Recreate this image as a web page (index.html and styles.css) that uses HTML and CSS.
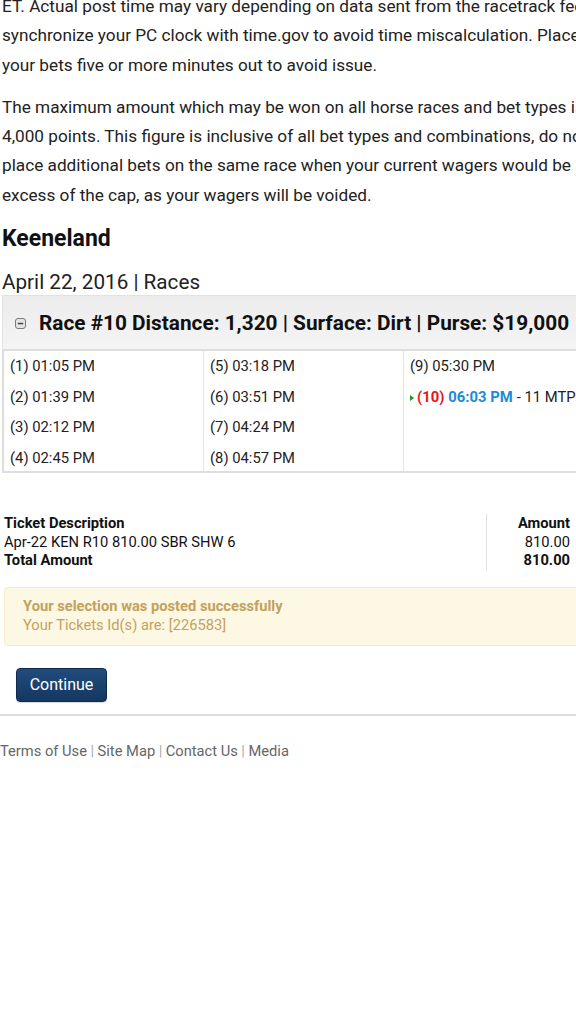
FILE: index.html
```html
<!DOCTYPE html>
<html>
<head>
<meta charset="utf-8">
<link rel="stylesheet" href="styles.css">
</head>
<body>
<div class="page">
  <p class="note first">ET. Actual post time may vary depending on data sent from the racetrack feed. synchronize your PC clock with time.gov to avoid time miscalculation. Place your bets five or more minutes out to avoid issue.</p>
  <p class="note">The maximum amount which may be won on all horse races and bet types is 4,000 points. This figure is inclusive of all bet types and combinations, do not place additional bets on the same race when your current wagers would be in excess of the cap, as your wagers will be voided.</p>
  <h2 class="track">Keeneland</h2>
  <div class="date">April 22, 2016 | Races</div>
  <div class="race-head">
    <svg class="minus" width="11" height="11" viewBox="0 0 11 11"><rect x="0.5" y="0.5" width="10" height="10" rx="2.5" fill="#e4e4e4" stroke="#7a7a7a"/><rect x="2.8" y="4.8" width="5.4" height="1.5" fill="#444"/></svg>
    <span>Race #10 Distance: 1,320 | Surface: Dirt | Purse: $19,000</span>
  </div>
  <div class="times">
    <div class="col">
      <div class="t">(1) 01:05 PM</div>
      <div class="t">(2) 01:39 PM</div>
      <div class="t">(3) 02:12 PM</div>
      <div class="t">(4) 02:45 PM</div>
    </div>
    <div class="col">
      <div class="t">(5) 03:18 PM</div>
      <div class="t">(6) 03:51 PM</div>
      <div class="t">(7) 04:24 PM</div>
      <div class="t">(8) 04:57 PM</div>
    </div>
    <div class="col">
      <div class="t">(9) 05:30 PM</div>
      <div class="t cur"><span class="arrow"></span><b class="num">(10)</b><b class="time">06:03 PM</b>- 11 MTP</div>
    </div>
  </div>
  <div class="ticket">
    <div class="desc">
      <div class="b">Ticket Description</div>
      <div>Apr-22 KEN R10 810.00 SBR SHW 6</div>
      <div class="b">Total Amount</div>
    </div>
    <div class="amt">
      <div class="b">Amount</div>
      <div>810.00</div>
      <div class="b">810.00</div>
    </div>
  </div>
  <div class="alert">
    <div class="b">Your selection was posted successfully</div>
    <div>Your Tickets Id(s) are: [226583]</div>
  </div>
  <button class="btn">Continue</button>
  <hr class="rule">
  <div class="footer"><a>Terms of Use</a><span class="sep">|</span><a>Site Map</a><span class="sep">|</span><a>Contact Us</a><span class="sep">|</span><a>Media</a></div>
</div>
</body>
</html>
```
FILE: styles.css
```css
html, body { margin: 0; padding: 0; overflow: hidden; background: #fff; }
body { font-family: Roboto, "Liberation Sans", sans-serif; color: #222; width: 576px; }
.page { width: 640px; }
.note { margin: 0 0 13px 2px; font-size: 17.2px; line-height: 29.3px; width: 612px; color: #222; }
.note.first { margin-top: -8px; }
.track { margin: 15px 0 0 2px; font-size: 23px; font-weight: bold; line-height: 27px; color: #111; }
.date { margin: 17px 0 0 2px; font-size: 20.7px; line-height: 26px; color: #222; }
.race-head { margin: 0 0 0 2px; height: 54px; background: linear-gradient(#ececec, #f4f4f4); border: 1px solid #e2e2e2; border-bottom: none; display: flex; align-items: center; gap: 13px; padding-left: 12px; box-sizing: border-box; }
.race-head span { font-size: 20.8px; font-weight: bold; color: #111; }
.minus { flex: none; margin-top: 1px; }
.times { margin-left: 2px; display: flex; border: 2px solid #ddd; width: 620px; box-sizing: border-box; background: #fff; height: 124px; }
.col { width: 200px; border-right: 1px solid #e6e6e6; padding: 0 0 0 6px; box-sizing: border-box; }
.col:last-child { border-right: none; flex: 1; }
.t { font-size: 14.8px; line-height: 30.5px; color: #222; white-space: nowrap; }
.cur { display: flex; align-items: center; }
.arrow { display: inline-block; width: 0; height: 0; border-left: 4px solid #1a9a1a; border-top: 3.5px solid transparent; border-bottom: 3.5px solid transparent; margin-right: 3px; margin-top: 2px; }
.num { color: #e8141a; margin-right: 4px; }
.time { color: #1b8bd6; margin-right: 4px; }
.ticket { display: flex; margin: 41px 0 0 4px; width: 566px; font-size: 14.7px; line-height: 18.5px; color: #111; }
.desc { flex: 1; border-right: 1px solid #dde; }
.amt { width: 83px; text-align: right; }
.b { font-weight: bold; }
.alert { margin: 17px 0 0 4px; width: 620px; box-sizing: border-box; background: #fcf8e3; border: 1px solid #f7ebc6; border-radius: 4px; padding: 9px 18px 10px; color: #c4a15e; font-size: 14.7px; line-height: 19px; }
.btn { display: block; margin: 22px 0 0 16px; width: 91px; height: 34px; border: 1px solid #0f2a4c; border-radius: 4px; background: linear-gradient(#214c7c, #143760); color: #fff; font-family: Roboto, "Liberation Sans", sans-serif; font-size: 16px; padding: 0; box-shadow: 0 1px 1px rgba(0,0,0,0.15); }
.rule { margin: 12px 0 0 0; border: none; border-top: 2px solid #ddd; width: 620px; }
.footer { margin-top: 26px; font-size: 14.7px; color: #666; }
.footer a { color: #666; }
.sep { color: #aaa; margin: 0 3.5px; }
```
